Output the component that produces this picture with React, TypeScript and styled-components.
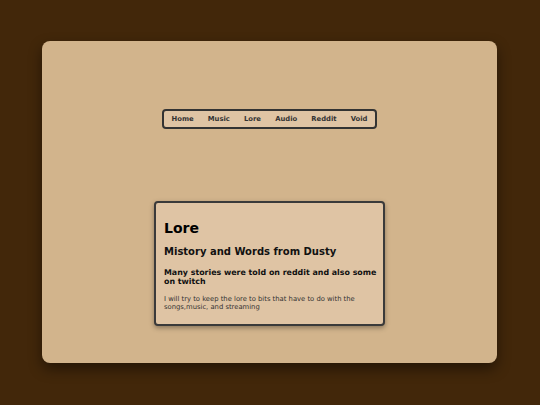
import React from "react";
import styled, { createGlobalStyle } from "styled-components";

const Global = createGlobalStyle`
  html, body { margin: 0; padding: 0; }
  body {
    background: #42270a;
    font-family: "DejaVu Sans", Verdana, sans-serif;
    width: 540px;
    height: 405px;
    overflow: hidden;
  }
`;

const Page = styled.div`
  padding: 41px 43px 42px 42px;
  box-sizing: border-box;
  height: 405px;
`;

const Panel = styled.main`
  background: #d2b48c;
  border-radius: 8px;
  height: 322px;
  box-shadow: 0 6px 14px rgba(0, 0, 0, 0.45);
  display: flex;
  flex-direction: column;
  align-items: center;
  padding-top: 68px;
  box-sizing: border-box;
`;

const Nav = styled.nav`
  display: flex;
  gap: 14.2px;
  padding: 0 8px;
  height: 20px;
  box-sizing: border-box;
  align-items: center;
  background: #dfc4a4;
  border: 2px solid #333;
  border-radius: 4px;
`;

const NavLink = styled.a`
  font-size: 6.8px;
  font-weight: bold;
  color: #333;
  text-decoration: none;
`;

const Card = styled.section`
  margin-top: 72px;
  width: 231px;
  height: 125px;
  box-sizing: border-box;
  background: #dfc4a4;
  border: 2px solid #3a3a3a;
  border-radius: 4px;
  box-shadow: 0 2px 5px rgba(0, 0, 0, 0.35);
  padding: 17px 1px 0 8px;
`;

const H1 = styled.h1`
  margin: 0;
  font-size: 14px;
  line-height: 17px;
  color: #000;
`;

const H2 = styled.h2`
  margin: 9px 0 0;
  font-size: 10px;
  line-height: 12px;
  color: #111;
`;

const H3 = styled.h3`
  margin: 9.5px 0 0;
  font-size: 7.9px;
  line-height: 9px;
  color: #111;
`;

const P = styled.p`
  margin: 9px 0 0;
  padding-right: 3px;
  font-size: 6.8px;
  line-height: 8.4px;
  color: #333;
`;

export default function App() {
  const links = ["Home", "Music", "Lore", "Audio", "Reddit", "Void"];
  return (
    <>
      <Global />
      <Page>
        <Panel>
          <Nav>
            {links.map((l) => (
              <NavLink key={l} href="#">
                {l}
              </NavLink>
            ))}
          </Nav>
          <Card>
            <H1>Lore</H1>
            <H2>Mistory and Words from Dusty</H2>
            <H3>Many stories were told on reddit and also some on twitch</H3>
            <P>I will try to keep the lore to bits that have to do with the songs,music, and streaming</P>
          </Card>
        </Panel>
      </Page>
    </>
  );
}
